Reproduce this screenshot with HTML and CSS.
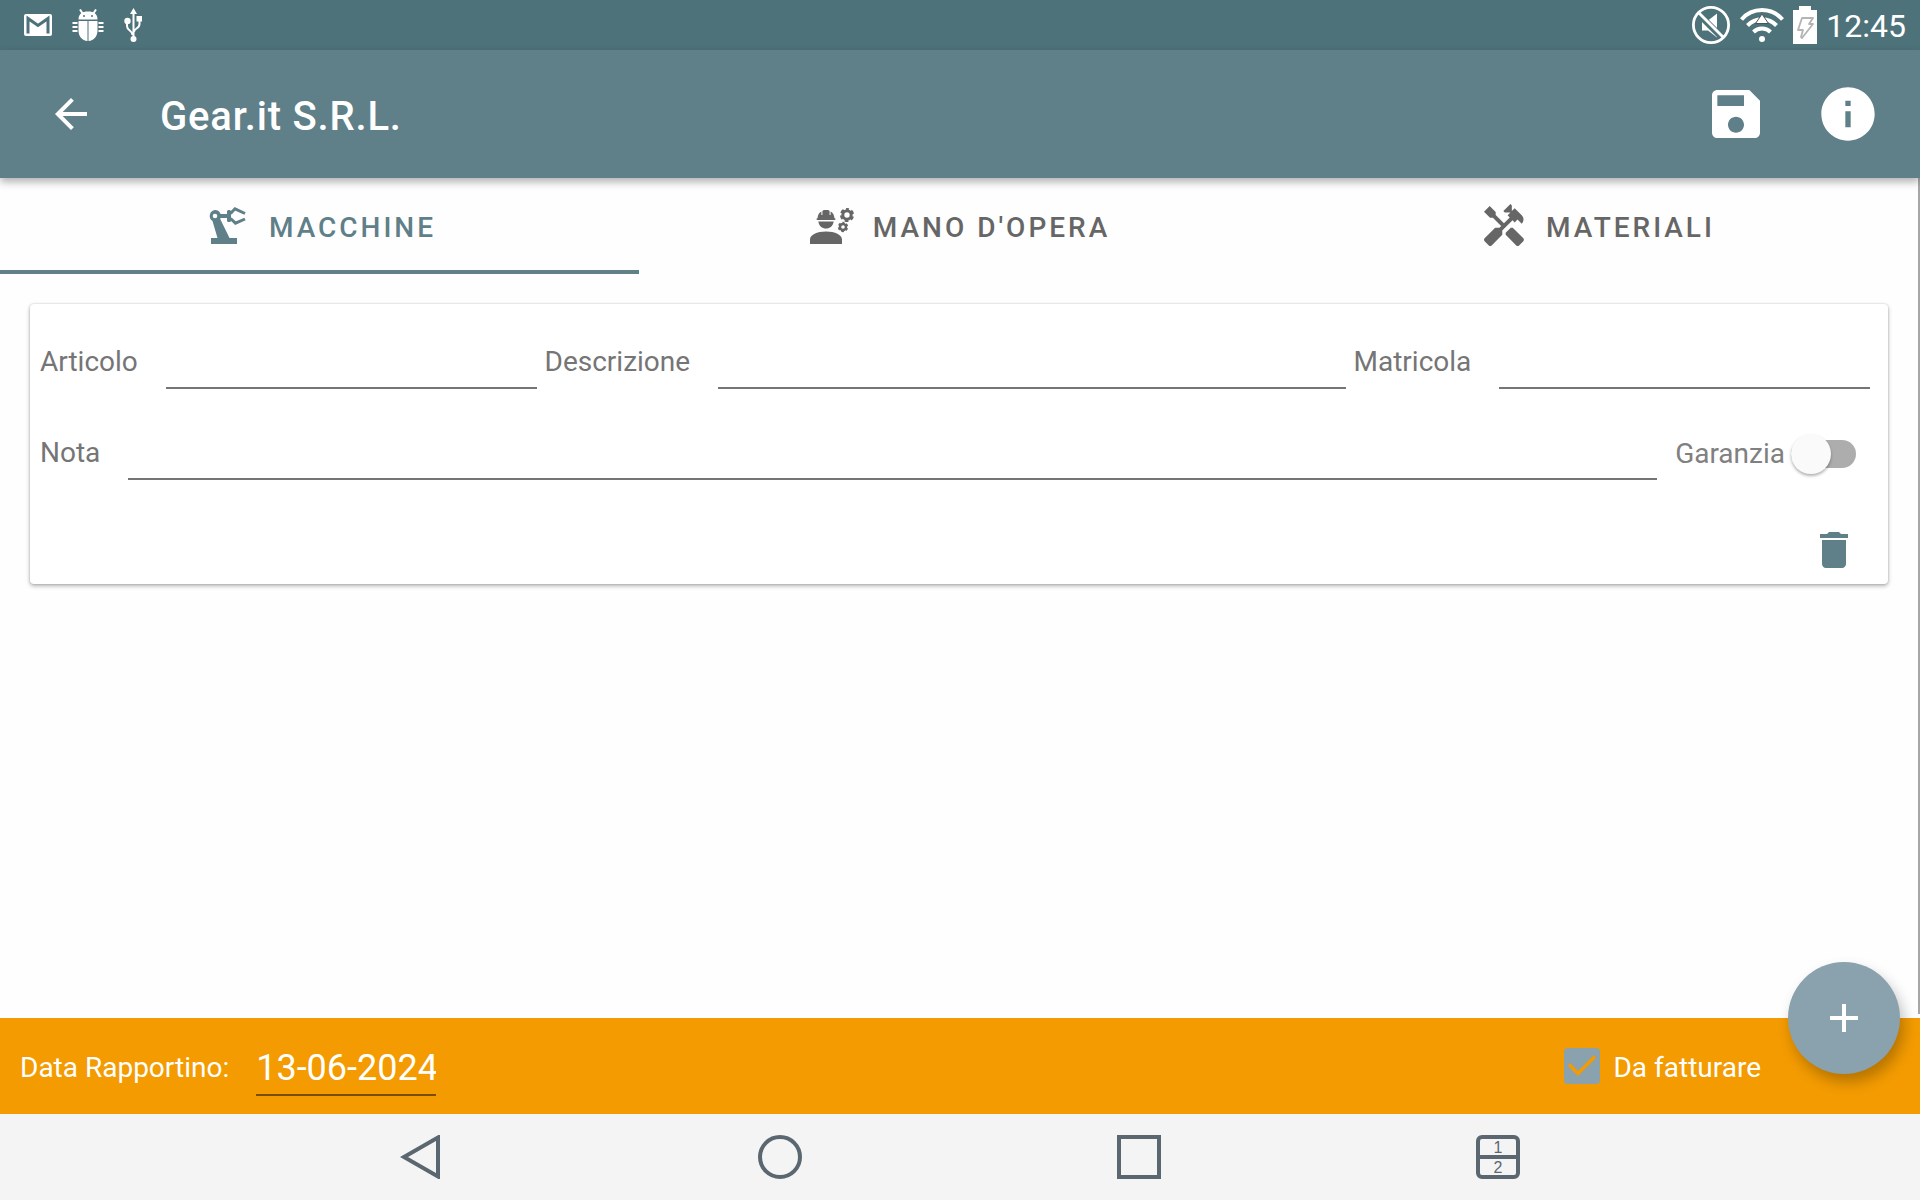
FILE: index.html
```html
<!DOCTYPE html>
<html lang="it">
<head>
<meta charset="utf-8">
<meta name="viewport" content="width=device-width, initial-scale=1">
<title>Gear.it S.R.L.</title>
<link rel="stylesheet" href="styles.css">
</head>
<body>
<div class="status-bar">
  <div class="status-left">
    <svg width="28" height="24" viewBox="0 0 28 24"><rect y="1" width="28" height="22" rx="2" fill="#fff"/><path d="M4 20.500V5.500L14 12.500L24 5.500V20.500" fill="none" stroke="#4e7279" stroke-width="3"/></svg>
    <svg width="32" height="32" viewBox="0 0 32 32" fill="#fff"><path d="M6.500 10.500C6.500 5 10 2.500 16 2.500s9.500 2.500 9.500 8z"/><path d="M11 5L8 .5M21 5L24 .5" stroke="#fff" stroke-width="2"/><path d="M6.500 12H15.500V32C10 31.500 6.500 27 6.500 22zM16.500 12H25.500V22C25.500 27 22 31.500 16.500 32z"/><path d="M.5 14H5.500M.5 18H5.500M.5 22H5.500M26.500 14H31.500M26.500 18H31.500M26.500 22H31.500" stroke="#fff" stroke-width="2"/><circle cx="12" cy="7" r="1" fill="#4e7279"/><circle cx="20" cy="7" r="1" fill="#4e7279"/></svg>
    <svg width="18" height="34" viewBox="0 0 18 34" fill="none" stroke="#fff" stroke-width="2"><path d="M9.500 5V30M3 13v5c0 5 5.500 4 5.500 9M15.500 13v3c0 5-5.500 4-5.500 8"/><path d="M9.500 0L13 6H6zM12.500 8h5.500v5.500h-5.500z" fill="#fff" stroke="none"/><circle cx="3.500" cy="13" r="3.200" fill="#fff" stroke="none"/><circle cx="9.500" cy="31" r="3" fill="#fff" stroke="none"/></svg>
  </div>
  <div class="status-right">
    <svg width="40" height="40" viewBox="0 0 40 40"><path d="M11 15.500h6l9-7v24l-9-7h-6z" fill="#fff"/><path d="M7 8.500L31 32.500" stroke="#4e7279" stroke-width="6.500"/><circle cx="20" cy="20" r="17.600" fill="none" stroke="#fff" stroke-width="2.800"/><path d="M7.500 7.500L32.500 32.500" stroke="#fff" stroke-width="2.800"/></svg>
    <svg width="44" height="36" viewBox="0 0 44 36" fill="none" stroke="#fff" stroke-width="4"><path d="M1.500 12.500A27 27 0 0 1 42.500 12.500M7.500 18.500A20 20 0 0 1 36.500 18.500M13.500 25A12 12 0 0 1 30.500 25"/><circle cx="22" cy="32" r="3" fill="#fff" stroke="none"/><path d="M15.500 16.500L22 7L28.500 16.500z" fill="#fff" stroke="#4a5558" stroke-width="1"/></svg>
    <svg width="24" height="38" viewBox="0 0 24 38"><path d="M6 0h12v4h6v34H0V4h6z" fill="#fff"/><path d="M9 12H20L16 18H20L9 32L8 31L10 24H5z" fill="none" stroke="#b4b4b4" stroke-width="1.800" stroke-linejoin="round"/></svg>
    <span class="clock">12:45</span>
  </div>
</div>

<header class="app-bar">
  <button class="icon-button" type="button" aria-label="Indietro">
    <svg width="48" height="48" viewBox="0 0 24 24" fill="currentColor"><path d="M20 11H7.830l5.590-5.590L12 4l-8 8 8 8 1.410-1.410L7.830 13H20v-2z"/></svg>
  </button>
  <h1 class="app-title">Gear.it S.R.L.</h1>
  <button class="icon-button" type="button" aria-label="Salva">
    <svg width="64" height="64" viewBox="0 0 24 24" fill="currentColor"><path d="M17 3H5c-1.110 0-2 .9-2 2v14c0 1.100.89 2 2 2h14c1.100 0 2-.9 2-2V7l-4-4zm-5 16c-1.660 0-3-1.340-3-3s1.340-3 3-3 3 1.340 3 3-1.340 3-3 3zm3-10H5V5h10v4z"/></svg>
  </button>
  <button class="icon-button" type="button" aria-label="Informazioni">
    <svg width="64" height="64" viewBox="0 0 24 24" fill="currentColor"><path d="M12 2C6.480 2 2 6.480 2 12s4.480 10 10 10 10-4.480 10-10S17.520 2 12 2zm1 15h-2v-6h2v6zm0-8h-2V7h2v2z"/></svg>
  </button>
</header>

<main class="content">
  <nav class="tabs">
    <a class="tab tab-active" href="#macchine">
      <svg width="48" height="48" viewBox="0 0 48 48" fill="currentColor"><path fill-rule="evenodd" d="M12 8a6 6 0 0 1 5.600 4H24V9.500Q24 8 25.500 8H26.500Q28 8 28 9.500V18.500Q28 20 26.500 20H25.500Q24 20 24 18.500V16H17.600L17.200 17L26.500 36H34V42H8V36H14.500L9.500 19A6 6 0 0 1 12 8zM12 11.700a2.300 2.300 0 1 0 0 4.600a2.300 2.300 0 1 0 0-4.600z"/><path d="M27.500 11.500L32 6.800L42 11.500M27.500 16.500L32.500 21.200L42 17" fill="none" stroke="currentColor" stroke-width="3"/></svg>
      <span class="tab-text">MACCHINE</span>
    </a>
    <a class="tab" href="#mano-opera">
      <svg width="48" height="48" viewBox="0 0 48 48" fill="currentColor"><path d="M3 42V37.500C3 33 10 29.500 19 29.500S35 33 35 37.500V42zM11.300 19.500H26.700C26 24 23 26.500 19 26.500S12 24 11.300 19.500zM9.700 18V16.200H10.600C10.600 13 12.300 10.400 14.400 9.400V13H15.400V9L16.800 8H21.200L22.600 9V13H23.600V9.400C25.700 10.400 27.400 13 27.400 16.200H28.300V18z"/><g fill="none" stroke="currentColor"><circle cx="40" cy="13" r="4.200" stroke-width="3"/><circle cx="40" cy="13" r="5.800" stroke-width="2.600" stroke-dasharray="3.600 2.474" stroke-dashoffset="1.800" transform="rotate(-90 40 13)"/><circle cx="36" cy="25" r="3" stroke-width="2.400"/><circle cx="36" cy="25" r="4.200" stroke-width="2" stroke-dasharray="2.500 1.898" stroke-dashoffset="1.250" transform="rotate(-90 36 25)"/></g></svg>
      <span class="tab-text">MANO D'OPERA</span>
    </a>
    <a class="tab" href="#materiali">
      <svg width="48" height="48" viewBox="0 0 24 24" fill="currentColor"><path d="M21.670 18.170l-5.300-5.300h-.99l-2.540 2.540v.99l5.300 5.300c.39.39 1.020.39 1.410 0l2.120-2.120c.39-.38.39-1.020 0-1.410z"/><path d="M17.340 10.190l1.410-1.410 2.120 2.120c1.170-1.170 1.170-3.070 0-4.240l-3.540-3.540-1.410 1.410V1.710L15.220 1l-3.540 3.540.71.71h2.830l-1.410 1.410 1.060 1.060-2.890 2.890-4.130-4.130V5.060L4.830 2.040 2 4.870 5.030 7.900h1.410l4.130 4.130-.85.85H7.600l-5.300 5.300c-.39.39-.39 1.020 0 1.410l2.120 2.120c.39.39 1.020.39 1.410 0l5.300-5.300v-2.120l5.150-5.150 1.060 1.050z"/></svg>
      <span class="tab-text">MATERIALI</span>
    </a>
  </nav>

  <form class="card">
    <div class="row">
      <label class="label" for="articolo">Articolo</label>
      <input class="field field-short" id="articolo" type="text">
      <label class="label" for="descrizione">Descrizione</label>
      <input class="field field-long" id="descrizione" type="text">
      <label class="label" for="matricola">Matricola</label>
      <input class="field field-short" id="matricola" type="text">
    </div>
    <div class="row">
      <label class="label" for="nota">Nota</label>
      <input class="field field-long" id="nota" type="text">
      <label class="switch-label">Garanzia<input class="switch" type="checkbox" role="switch"></label>
    </div>
    <div class="row row-actions">
      <button class="icon-button delete" type="button" aria-label="Elimina">
        <svg width="48" height="48" viewBox="0 0 24 24" fill="currentColor"><path d="M6 19c0 1.100.9 2 2 2h8c1.100 0 2-.9 2-2V7H6v12zM19 4h-3.500l-1-1h-5l-1 1H5v2h14V4z"/></svg>
      </button>
    </div>
  </form>
  <div class="scroll-thumb"></div>
</main>

<footer class="bottom-bar">
  <label class="bar-text" for="data">Data Rapportino:</label>
  <input class="date" id="data" type="text" value="13-06-2024">
  <label class="check-label">
    <span class="check-wrap"><input class="check" type="checkbox" checked><svg class="check-mark" width="36" height="36" viewBox="0 0 36 36" fill="none" stroke="#f39b00" stroke-width="3.500"><path d="M5 16.500L14 25.500L31 8.500"/></svg></span>
    <span class="bar-text">Da fatturare</span>
  </label>
  <button class="fab" type="button" aria-label="Aggiungi">
    <svg width="48" height="48" viewBox="0 0 24 24" fill="currentColor"><path d="M19 13h-6v6h-2v-6H5v-2h6V5h2v6h6v2z"/></svg>
  </button>
</footer>

<nav class="system-nav">
  <button type="button" aria-label="Indietro"><svg width="44" height="44" viewBox="0 0 44 44"><path d="M5 22L39 2.500V41.500z"/></svg></button>
  <button type="button" aria-label="Home"><svg width="44" height="44" viewBox="0 0 44 44"><circle cx="22" cy="22" r="20"/></svg></button>
  <button type="button" aria-label="Recenti"><svg width="44" height="44" viewBox="0 0 44 44"><path d="M2 2H42V42H2z"/></svg></button>
  <button type="button" aria-label="Doppia finestra"><svg width="44" height="44" viewBox="0 0 44 44"><rect x="2" y="2" width="40" height="40" rx="4"/><path d="M2 22H42"/><text class="nav-digit" x="22" y="18">1</text><text class="nav-digit" x="22" y="38">2</text></svg></button>
</nav>
</body>
</html>
```
FILE: styles.css
```css
* {
  box-sizing: border-box;
}

body {
  margin: 0;
  min-height: 100vh;
  display: flex;
  flex-direction: column;
  background: #fefefe;
  color: #757575;
  font-family: Roboto, "Noto Sans", sans-serif;
  font-size: 28px;
}

svg {
  display: block;
  flex: none;
}

button {
  padding: 0;
  border: 0;
  background: none;
  color: inherit;
}

input {
  margin: 0;
  font: inherit;
}

/* Status bar */
.status-bar {
  height: 50px;
  padding: 0 14px 0 24px;
  display: flex;
  justify-content: space-between;
  align-items: center;
  background: #4e7279;
  color: #fff;
}

.status-left,
.status-right {
  display: flex;
  align-items: center;
}

.status-left {
  gap: 20px;
}

.status-right {
  gap: 9px;
}

.clock {
  padding-top: 2px;
  font-size: 32px;
  line-height: 48px;
}

/* App bar */
.app-bar {
  position: relative;
  z-index: 1;
  height: 128px;
  padding: 0 40px 0 47px;
  display: flex;
  align-items: center;
  gap: 48px;
  background: #5f7f89;
  color: #fff;
  box-shadow: 0 4px 8px rgba(0, 0, 0, 0.3);
}

.app-title {
  flex: 1;
  margin: 0;
  padding: 5px 0 0 17px;
  font-size: 40px;
  line-height: 48px;
  font-weight: 500;
  letter-spacing: 0.02em;
}

/* Tabs */
.content {
  position: relative;
  flex: 1;
}

.tabs {
  height: 96px;
  margin-right: 3px;
  display: grid;
  grid-template-columns: repeat(3, 1fr);
}

.tab {
  display: flex;
  justify-content: center;
  align-items: center;
  gap: 18px;
  padding-top: 4px;
  border-bottom: 4px solid transparent;
  color: #666;
  font-weight: 500;
  letter-spacing: 3px;
  text-decoration: none;
}

.tab-text {
  padding-top: 2px;
}

.tab-active {
  border-bottom-color: #5f7f89;
  color: #5f7f89;
}

/* Form card */
.card {
  margin: 30px 32px 30px 30px;
  padding: 37px 18px 7px 10px;
  display: flex;
  flex-direction: column;
  gap: 43px;
  border-radius: 4px;
  background: #fff;
  box-shadow: 0 2px 4px rgba(0, 0, 0, 0.3), 0 0 2px rgba(0, 0, 0, 0.2);
}

.row {
  display: flex;
  align-items: flex-start;
  gap: 8px;
}

.row-actions {
  justify-content: flex-end;
}

.label {
  margin-right: 20px;
  line-height: 42px;
}

.field {
  min-width: 0;
  height: 48px;
  padding: 0;
  border: 0;
  border-bottom: 2px solid #757575;
  background: none;
  color: #222;
}

.field-short {
  flex: 13 1 0;
}

.field-long {
  flex: 22 1 0;
}

.switch-label {
  height: 43px;
  margin: 0 14px 0 10px;
  display: flex;
  align-items: center;
  gap: 6px;
  color: #808080;
}

.switch {
  appearance: none;
  width: 65px;
  height: 28px;
  display: flex;
  align-items: center;
  border-radius: 14px;
  background: #adadad;
}

.switch::before {
  content: "";
  width: 40px;
  height: 40px;
  flex: none;
  border-radius: 50%;
  background: #fafafa;
  box-shadow: 0 2px 3px rgba(0, 0, 0, 0.3);
}

.switch:checked {
  justify-content: flex-end;
}

.delete {
  margin-right: 12px;
  padding: 3px 0;
  color: #5f7f89;
}

.scroll-thumb {
  position: absolute;
  top: 0;
  right: 0;
  bottom: 4px;
  width: 2px;
  background: #a6a6a6;
}

/* Bottom bar */
.bottom-bar {
  position: relative;
  height: 96px;
  padding: 0 159px 0 20px;
  display: flex;
  align-items: center;
  background: #f39b00;
  color: #fff;
}

.bar-text {
  padding-top: 2px;
}

.date {
  width: 180px;
  height: 60px;
  margin-left: 27px;
  padding: 6px 0 0;
  border: 0;
  border-bottom: 2px solid #7a4e00;
  background: none;
  color: inherit;
  font-size: 36px;
}

.check-label {
  margin-left: auto;
  display: flex;
  align-items: center;
  gap: 13px;
}

.check-wrap {
  display: grid;
}

.check,
.check-mark {
  grid-area: 1 / 1;
}

.check {
  appearance: none;
  width: 36px;
  height: 36px;
  border-radius: 4px;
  background: #8aa1ae;
}

.check-mark {
  pointer-events: none;
}

.check:not(:checked) + .check-mark {
  visibility: hidden;
}

.fab {
  position: absolute;
  top: -56px;
  right: 20px;
  width: 112px;
  height: 112px;
  display: flex;
  align-items: center;
  justify-content: center;
  border-radius: 50%;
  background: #8aa1ae;
  box-shadow: 4px 8px 14px rgba(0, 0, 0, 0.25);
}

/* System navigation */
.system-nav {
  height: 86px;
  padding: 0 243px 0 241px;
  display: grid;
  grid-template-columns: repeat(4, 1fr);
  background: #f4f4f4;
}

.system-nav button {
  display: flex;
  align-items: center;
  justify-content: center;
}

.system-nav svg {
  fill: none;
  stroke: #5b6770;
  stroke-width: 4px;
}

.system-nav .nav-digit {
  fill: #5b6770;
  stroke: none;
  font-size: 16px;
  font-weight: 500;
  text-anchor: middle;
}
```
